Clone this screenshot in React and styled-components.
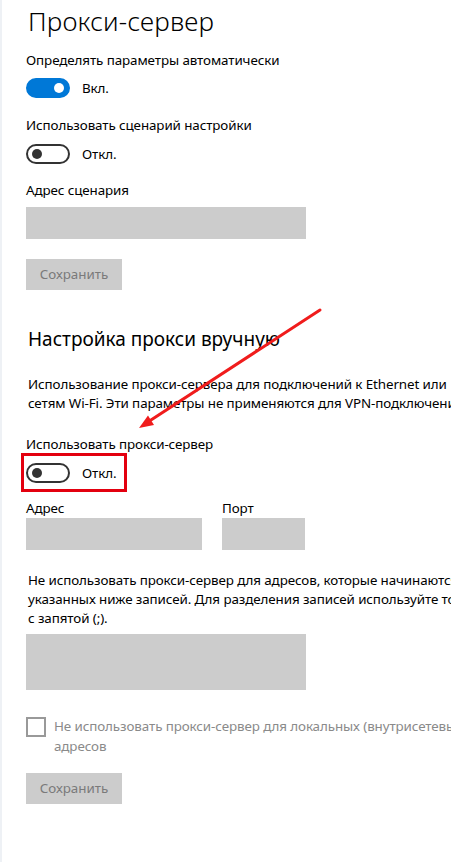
import React from 'react'
import styled, { createGlobalStyle } from 'styled-components'

const GlobalStyle = createGlobalStyle`
  html, body {
    margin: 0;
    padding: 0;
    background: #ffffff;
    overflow: hidden;
  }
  body {
    font-family: 'Noto Sans', 'Open Sans', sans-serif;
    color: #000000;
  }
`

const Toggle = ({ on, label }) => (
  <ToggleRow>
    <Track $on={on}>
      <Knob $on={on} />
    </Track>
    <ToggleText>{label}</ToggleText>
  </ToggleRow>
)

const App = () => {
  return (
    <Page>
      <GlobalStyle />
      <Title>Прокси-сервер</Title>

      <Label $top={12}>Определять параметры автоматически</Label>
      <Spacer $h={8} />
      <Toggle on label="Вкл." />

      <Label $top={17}>Использовать сценарий настройки</Label>
      <Spacer $h={9} />
      <Toggle label="Откл." />

      <Label $top={16}>Адрес сценария</Label>
      <Spacer $h={7} />
      <Field $w={280} $h={32} />
      <SaveButton>Сохранить</SaveButton>

      <Heading>Настройка прокси вручную</Heading>
      <Paragraph $top={22}>
        Использование прокси-сервера для подключений к Ethernet или
        <br />
        сетям Wi-Fi. Эти параметры не применяются для VPN-подключений.
      </Paragraph>

      <Label $top={21}>Использовать прокси-сервер</Label>
      <Spacer $h={9} />
      <Highlight>
        <Toggle label="Откл." />
      </Highlight>

      <FieldRow>
        <FieldGroup>
          <SmallLabel>Адрес</SmallLabel>
          <Field $w={176} $h={32} />
        </FieldGroup>
        <FieldGroup>
          <SmallLabel>Порт</SmallLabel>
          <Field $w={83} $h={32} />
        </FieldGroup>
      </FieldRow>

      <Paragraph $top={21}>
        Не использовать прокси-сервер для адресов, которые начинаются с
        <br />
        указанных ниже записей. Для разделения записей используйте точку
        <br />
        с запятой (;).
      </Paragraph>
      <Spacer $h={6} />
      <Field $w={280} $h={56} />

      <CheckRow>
        <CheckBox />
        <CheckText>
          Не использовать прокси-сервер для локальных (внутрисетевых)
          <br />
          адресов
        </CheckText>
      </CheckRow>
      <SaveButton $top={17}>Сохранить</SaveButton>

      <Arrow width="451" height="862" viewBox="0 0 451 862">
        <line
          x1="318"
          y1="310"
          x2="149"
          y2="420"
          stroke="#f01c1c"
          strokeWidth="3"
          strokeLinecap="round"
        />
        <polygon points="137,428 152,425 146,415.5" fill="#f01c1c" />
      </Arrow>
    </Page>
  )
}

const Page = styled.div`
  position: relative;
  width: 451px;
  height: 862px;
  box-sizing: border-box;
  padding: 4px 0 0 26px;
  border-left: 2px solid #eef1f5;
  overflow: hidden;
  & > * {
    margin-left: -2px;
  }
`

const Title = styled.h1`
  margin: 0;
  font-size: 26px;
  line-height: 34px;
  font-weight: 300;
  letter-spacing: 0.2px;
`

const Heading = styled.h2`
  margin: 35px 0 0;
  font-size: 19px;
  line-height: 28px;
  font-weight: 400;
`

const textStyle = `
  font-size: 13.4px;
  letter-spacing: -0.1px;
  white-space: nowrap;
`

const Label = styled.div`
  margin-top: ${(p) => p.$top || 0}px;
  line-height: 20px;
  ${textStyle}
`

const SmallLabel = styled.div`
  line-height: 19px;
  ${textStyle}
`

const Paragraph = styled.p`
  margin: ${(p) => p.$top || 0}px 0 0;
  line-height: 19px;
  ${textStyle}
`

const Spacer = styled.div`
  height: ${(p) => p.$h}px;
`

const ToggleRow = styled.div`
  display: flex;
  align-items: center;
  gap: 12px;
  height: 20px;
`

const Track = styled.div`
  position: relative;
  width: 44px;
  height: 20px;
  box-sizing: border-box;
  border-radius: 10px;
  background: ${(p) => (p.$on ? '#0078d7' : 'transparent')};
  border: 2px solid ${(p) => (p.$on ? '#0078d7' : '#333333')};
`

const Knob = styled.div`
  position: absolute;
  top: 3px;
  left: ${(p) => (p.$on ? '26px' : '4px')};
  width: 10px;
  height: 10px;
  border-radius: 50%;
  background: ${(p) => (p.$on ? '#ffffff' : '#333333')};
`

const ToggleText = styled.span`
  line-height: 20px;
  ${textStyle}
`

const Highlight = styled.div`
  display: flex;
  align-items: center;
  width: 106px;
  height: 39px;
  box-sizing: border-box;
  border: 3px solid #e3000f;
  padding-left: 2px;
  margin: -10px 0 -9px -7px !important;
`

const Field = styled.div`
  width: ${(p) => p.$w}px;
  height: ${(p) => p.$h}px;
  background: #cccccc;
`

const FieldRow = styled.div`
  display: flex;
  gap: 20px;
  margin-top: 16px;
`

const FieldGroup = styled.div`
  display: flex;
  flex-direction: column;
`

const SaveButton = styled.div`
  margin-top: ${(p) => p.$top ?? 20}px;
  width: 96px;
  height: 31px;
  background: #cccccc;
  color: #7a7a7a;
  font-size: 13.4px;
  line-height: 31px;
  text-align: center;
`

const CheckRow = styled.div`
  display: flex;
  align-items: flex-start;
  gap: 8px;
  margin-top: 26px;
`

const CheckBox = styled.div`
  flex: none;
  width: 20px;
  height: 20px;
  margin-top: 1px;
  box-sizing: border-box;
  border: 2px solid #999999;
`

const CheckText = styled.div`
  line-height: 20px;
  color: #8a8a8a;
  ${textStyle}
`

const Arrow = styled.svg`
  position: absolute;
  left: 0;
  top: 0;
  margin: 0 !important;
  pointer-events: none;
`

export default App
